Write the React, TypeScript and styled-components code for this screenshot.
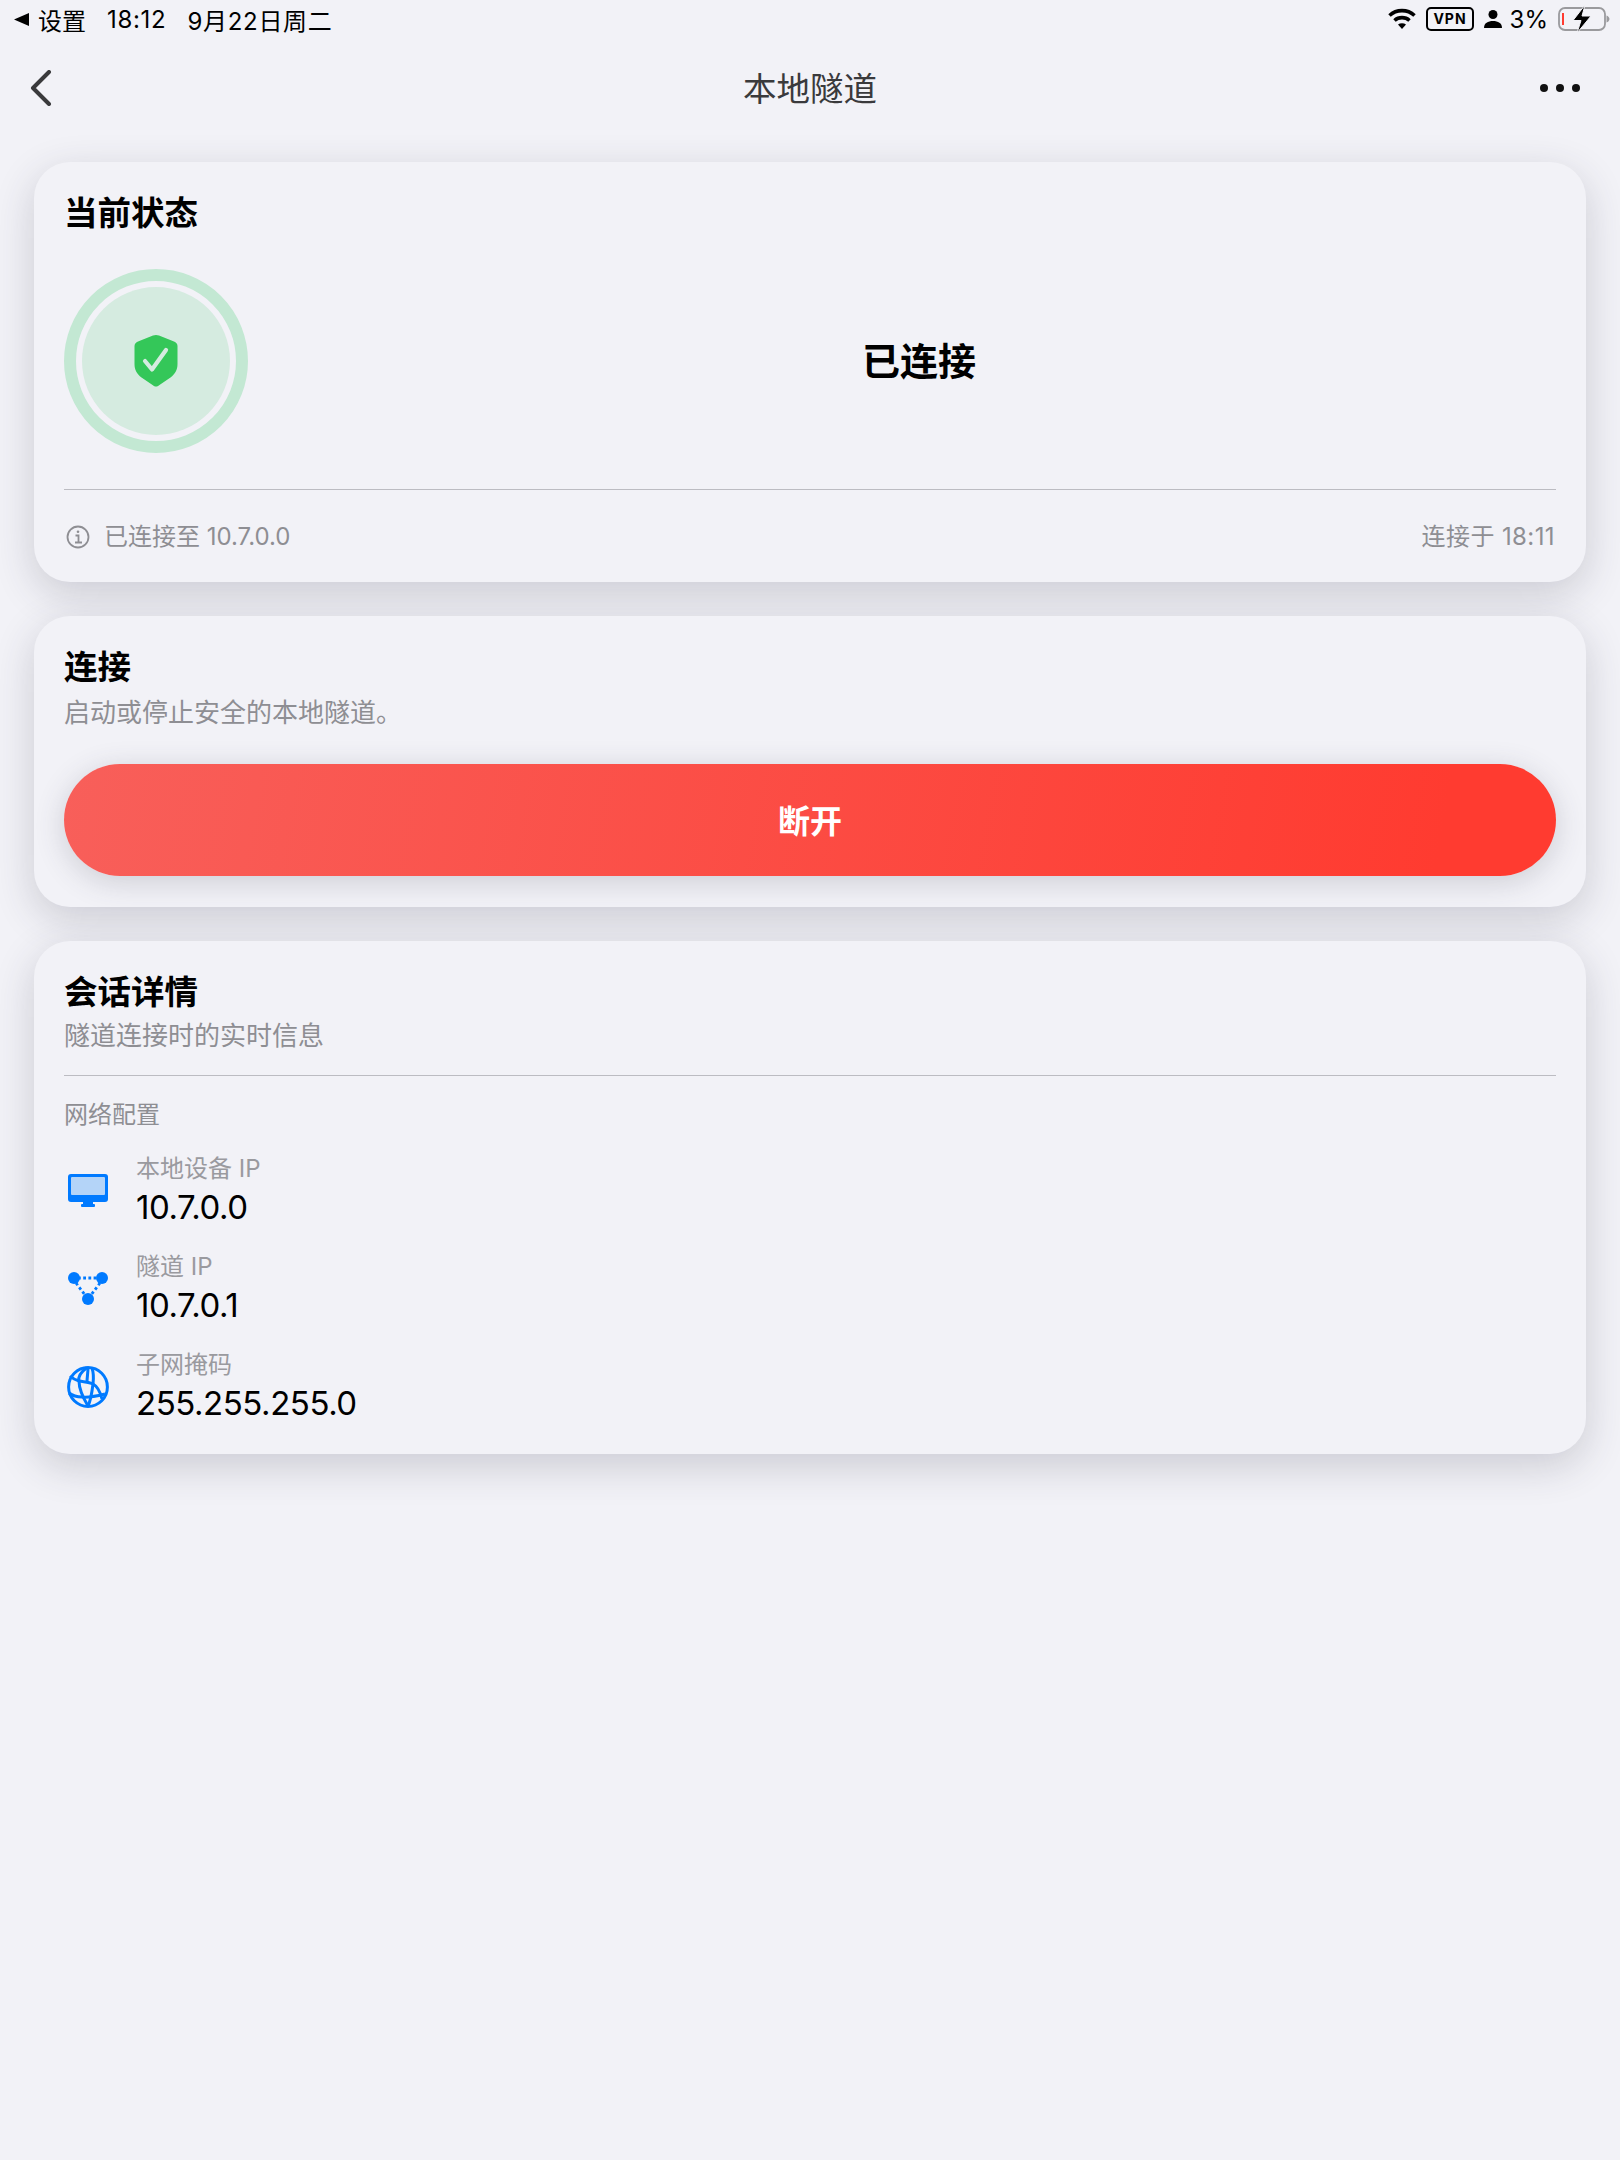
import styled, { createGlobalStyle } from "styled-components";
import { ReactNode } from "react";

const GlobalStyle = createGlobalStyle`
  html, body {
    margin: 0;
    padding: 0;
    background: #f2f2f7;
  }
  body {
    font-family: Inter, "Noto Sans CJK SC", sans-serif;
  }
`;

const Page = styled.div`
  width: 1620px;
  height: 2160px;
  background: #f2f2f7;
  overflow: hidden;
`;

const StatusBar = styled.div`
  height: 40px;
  padding: 0 10px 2px 14px;
  box-sizing: border-box;
  display: flex;
  align-items: center;
  justify-content: space-between;
  font-size: 24px;
  color: #000;
`;

const StatusGroup = styled.div<{ $gap: number }>`
  display: flex;
  align-items: center;
  gap: ${({ $gap }) => $gap}px;
`;

const StatusText = styled.span`
  letter-spacing: 0.7px;
`;

const Percent = styled.span`
  margin-left: -2px;
`;

const NavBar = styled.div`
  height: 96px;
  padding: 0 30px;
  display: grid;
  grid-template-columns: 1fr auto 1fr;
  align-items: center;
`;

const NavTitle = styled.div`
  font-size: 33.5px;
  color: #3a3a3c;
  margin-top: -4px;
`;

const Dots = styled.div`
  justify-self: end;
  display: flex;
  gap: 8px;
  margin-right: 10px;

  span {
    width: 8px;
    height: 8px;
    border-radius: 50%;
    background: #111;
  }
`;

const Cards = styled.div`
  margin-top: 26px;
  padding: 0 34px;
  display: flex;
  flex-direction: column;
  gap: 34px;
`;

const Card = styled.section`
  background: #f2f2f7;
  border-radius: 36px;
  padding: 30px;
  box-shadow: 0 12px 40px rgba(50, 50, 70, 0.2);
`;

const CardTitle = styled.h2`
  margin: 0;
  font-size: 33.5px;
  line-height: 42px;
  font-weight: 700;
  color: #000;
`;

const CardSub = styled.p<{ $top: number }>`
  margin: ${({ $top }) => $top}px 0 0;
  font-size: 26px;
  line-height: 36px;
  color: #8e8e93;
`;

const StatusRow = styled.div`
  margin-top: 35px;
  padding-bottom: 36px;
  display: flex;
  align-items: center;
  border-bottom: 1px solid #bcbcc2;
`;

const Ring = styled.div`
  width: 184px;
  height: 184px;
  box-sizing: border-box;
  border-radius: 50%;
  border: 12px solid #c3e8d3;
  padding: 6px;
  flex: none;
`;

const RingInner = styled.div`
  width: 100%;
  height: 100%;
  border-radius: 50%;
  background: #d5ebe0;
  display: flex;
  align-items: center;
  justify-content: center;
`;

const StatusLabel = styled.div`
  flex: 1;
  padding-left: 34px;
  margin-top: -6px;
  text-align: center;
  font-size: 38px;
  font-weight: 700;
  color: #000;
`;

const FootRow = styled.div`
  margin-top: 31px;
  margin-bottom: -1px;
  display: flex;
  align-items: center;
  justify-content: space-between;
  font-size: 24px;
  line-height: 32px;
  color: #8e8e93;
`;

const FootLeft = styled.div`
  display: flex;
  align-items: center;
  gap: 14px;
  padding-left: 2px;
`;

const FootTime = styled.span`
  letter-spacing: 0.4px;
  margin-right: 1px;
`;

const DisconnectButton = styled.button`
  display: block;
  width: 100%;
  height: 112px;
  margin: 33px 0 1px;
  padding: 0 0 3px;
  border: none;
  border-radius: 56px;
  background: linear-gradient(100deg, #f85f5a 0%, #ff3b30 92%);
  box-shadow: 0 6px 30px rgba(60, 60, 80, 0.2);
  color: #fff;
  font: 700 32px Inter, "Noto Sans CJK SC", sans-serif;
`;

const Divider = styled.div`
  height: 1px;
  margin-top: 21px;
  background: #bcbcc2;
`;

const SectionLabel = styled.div`
  margin-top: 23px;
  font-size: 24px;
  line-height: 32px;
  color: #8e8e93;
`;

const DetailList = styled.div`
  margin-top: 22px;
  margin-bottom: -1px;
  display: flex;
  flex-direction: column;
  gap: 22px;
`;

const DetailRow = styled.div`
  display: flex;
  align-items: center;
  gap: 24px;
`;

const DetailIcon = styled.div`
  width: 48px;
  height: 44px;
  display: flex;
  align-items: center;
  justify-content: center;
  flex: none;
`;

const DetailLabel = styled.div`
  font-size: 24px;
  line-height: 32px;
  color: #9a9a9f;
`;

const DetailValue = styled.div`
  font-size: 33px;
  line-height: 44px;
  letter-spacing: -0.45px;
  color: #000;
`;

const blue = "#007aff";

const MonitorIcon = () => (
  <svg width="40" height="34" viewBox="0 0 40 34">
    <rect x="0" y="0" width="40" height="28" rx="3" fill={blue} />
    <rect x="3" y="3" width="34" height="18" rx="1" fill="#b4d4f8" />
    <rect x="15" y="28" width="10" height="3" fill={blue} />
    <rect x="13" y="30" width="14" height="3" rx="1" fill={blue} />
  </svg>
);

const TunnelIcon = () => (
  <svg width="40" height="34" viewBox="0 0 40 34">
    <line x1="10" y1="6" x2="30" y2="6" stroke={blue} strokeWidth="2.8" strokeDasharray="2.8 2.4" />
    <line x1="8" y1="11" x2="17" y2="23" stroke={blue} strokeWidth="2.8" strokeDasharray="2.8 2.6" />
    <line x1="32" y1="11" x2="23" y2="23" stroke={blue} strokeWidth="2.8" strokeDasharray="2.8 2.6" />
    <circle cx="6" cy="6" r="6" fill={blue} />
    <circle cx="34" cy="6" r="6" fill={blue} />
    <circle cx="20" cy="27" r="6" fill={blue} />
  </svg>
);

const GlobeIcon = () => (
  <svg width="42" height="42" viewBox="0 0 42 42" fill="none" stroke={blue} strokeWidth="3">
    <circle cx="21" cy="21" r="19.400" />
    <path d="M20 1.500C14 6 11 11 12 15c0 6 3 15 9 25" />
    <path d="M25 2c2 6 1.500 12 1 16-1 8-2 16-5 22" />
    <path d="M21 2c0 4-1 10-1 14" />
    <path d="M3 10c3 3 6 4 9 5 5 1 10 1 14 3 4 2 7 7 9 15" />
    <path d="M2 27c4 3 8 4 13 4 7 1 15-1 23-3" />
  </svg>
);

const ShieldIcon = () => (
  <svg width="44" height="52" viewBox="0 0 44 52">
    <path
      d="M22 0c1 0 2 .2 3 .6l15 5.800c2 .8 3.500 2 3.500 4.600v18c0 6-2.500 10-7 13.500L24 51c-1.300.8-2.700.8-4 0L7.500 42.500C3 39 .5 35 .5 29V11C.5 8.400 2 7.200 4 6.400L19 .6c1-.4 2-.6 3-.6z"
      fill="#34c759"
    />
    <path d="M11 26l7 8.500L32 15" fill="none" stroke="#d5ebe0" strokeWidth="4.200" strokeLinecap="round" strokeLinejoin="round" />
  </svg>
);

const InfoIcon = () => (
  <svg width="24" height="24" viewBox="0 0 24 24" fill="none" stroke="#8e8e93" strokeWidth="1.800">
    <circle cx="12" cy="12" r="10.500" />
    <path d="M9.500 10.500H12.500V17M9 17.500h7" />
    <circle cx="12" cy="6.800" r="1.300" fill="#8e8e93" stroke="none" />
  </svg>
);

const ChevronIcon = () => (
  <svg width="22" height="36" viewBox="0 0 22 36" fill="none" stroke="#3a3a3c" strokeWidth="4" strokeLinecap="round" strokeLinejoin="round">
    <path d="M19 2L3 18l16 16" />
  </svg>
);

const BackTriangle = () => (
  <svg width="15" height="13" viewBox="0 0 15 13">
    <path d="M15 0v13L0 6.500z" fill="#000" />
  </svg>
);

const WifiIcon = () => (
  <svg width="28" height="22" viewBox="0 0 28 22" fill="none" stroke="#000" strokeWidth="3.600">
    <path d="M1.500 7.500C8.500 1 19.500 1 26.500 7.500" />
    <path d="M6.500 12.500c4.200-3.800 10.800-3.800 15 0" />
    <path d="M14 21l-4-4.500c2.300-1.600 5.700-1.600 8 0z" fill="#000" stroke="none" />
  </svg>
);

const VpnBadge = styled.div`
  height: 20px;
  padding: 0 5px;
  border: 2px solid #000;
  border-radius: 5px;
  font-size: 14px;
  line-height: 20px;
  font-weight: 700;
  letter-spacing: 1px;
`;

const PersonIcon = () => (
  <svg width="18" height="18" viewBox="0 0 18 18">
    <circle cx="9" cy="4.500" r="4.500" fill="#000" />
    <path d="M0 18c0-5 4-7 9-7s9 2 9 7z" fill="#000" />
  </svg>
);

const BatteryIcon = () => (
  <svg width="52" height="28" viewBox="0 0 52 28">
    <rect x="1" y="3" width="46" height="22" rx="6" fill="none" stroke="#9a9a9d" strokeWidth="1.800" />
    <rect x="4" y="8" width="2" height="12" fill="#ff3b30" />
    <path d="M48.500 10.500v7c1.600-.5 3-2 3-3.500s-1.400-3-3-3.500z" fill="#9a9a9d" />
    <path d="M27 0L15 15.500h8L19 28 33 11h-9z" fill="#000" stroke="#f2f2f7" strokeWidth="1" />
  </svg>
);

const Detail = ({ icon, label, value }: { icon: ReactNode; label: string; value: string }) => (
  <DetailRow>
    <DetailIcon>{icon}</DetailIcon>
    <div>
      <DetailLabel>{label}</DetailLabel>
      <DetailValue>{value}</DetailValue>
    </div>
  </DetailRow>
);

export default function App() {
  return (
    <Page>
      <GlobalStyle />
      <StatusBar>
        <StatusGroup $gap={21}>
          <StatusGroup $gap={9}>
            <BackTriangle />
            <span>设置</span>
          </StatusGroup>
          <StatusText>18:12</StatusText>
          <StatusText>9月22日周二</StatusText>
        </StatusGroup>
        <StatusGroup $gap={10}>
          <WifiIcon />
          <VpnBadge>VPN</VpnBadge>
          <PersonIcon />
          <Percent>3%</Percent>
          <BatteryIcon />
        </StatusGroup>
      </StatusBar>
      <NavBar>
        <ChevronIcon />
        <NavTitle>本地隧道</NavTitle>
        <Dots>
          <span />
          <span />
          <span />
        </Dots>
      </NavBar>
      <Cards>
        <Card>
          <CardTitle>当前状态</CardTitle>
          <StatusRow>
            <Ring>
              <RingInner>
                <ShieldIcon />
              </RingInner>
            </Ring>
            <StatusLabel>已连接</StatusLabel>
          </StatusRow>
          <FootRow>
            <FootLeft>
              <InfoIcon />
              <span>已连接至 10.7.0.0</span>
            </FootLeft>
            <FootTime>连接于 18:11</FootTime>
          </FootRow>
        </Card>
        <Card>
          <CardTitle>连接</CardTitle>
          <CardSub $top={7}>启动或停止安全的本地隧道。</CardSub>
          <DisconnectButton>断开</DisconnectButton>
        </Card>
        <Card>
          <CardTitle>会话详情</CardTitle>
          <CardSub $top={5}>隧道连接时的实时信息</CardSub>
          <Divider />
          <SectionLabel>网络配置</SectionLabel>
          <DetailList>
            <Detail icon={<MonitorIcon />} label="本地设备 IP" value="10.7.0.0" />
            <Detail icon={<TunnelIcon />} label="隧道 IP" value="10.7.0.1" />
            <Detail icon={<GlobeIcon />} label="子网掩码" value="255.255.255.0" />
          </DetailList>
        </Card>
      </Cards>
    </Page>
  );
}
